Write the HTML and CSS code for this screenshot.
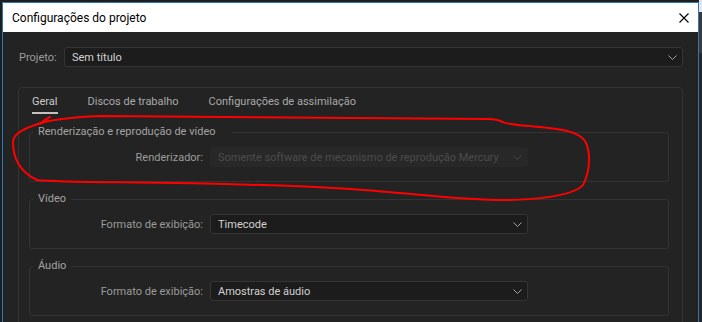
FILE: index.html
```html
<!DOCTYPE html>
<html lang="pt-BR">
<head>
  <meta charset="UTF-8">
  <meta name="viewport" content="width=device-width, initial-scale=1.0">
  <link rel="stylesheet" href="styles.css">
  <title>Configurações do projeto</title>
</head>
<body>
  <div class="screen">
    <div class="dialog">
      <div class="titlebar">
        <span class="title">Configurações do projeto</span>
        <svg class="close" width="10" height="10" viewBox="0 0 10 10">
          <path d="M0.5 0.5 L9.5 9.5 M9.5 0.5 L0.5 9.5" stroke="#000" stroke-width="1.1" fill="none"/>
        </svg>
      </div>

      <div class="dialog-body">
        <div class="project-row">
          <label>Projeto:</label>
          <div class="select">
            <span>Sem título</span>
            <svg class="chevron" width="9" height="5" viewBox="0 0 9 5"><polyline points="0.5,0.5 4.5,4.5 8.5,0.5"/></svg>
          </div>
        </div>

        <div class="tab-panel">
          <div class="tabs">
            <span class="tab active">Geral</span>
            <span class="tab">Discos de trabalho</span>
            <span class="tab">Configurações de assimilação</span>
          </div>

          <!-- Renderização -->
          <fieldset class="group">
            <legend class="wide">Renderização e reprodução de vídeo</legend>
            <div class="field-row">
              <label>Renderizador:</label>
              <div class="select disabled">
                <span>Somente software de mecanismo de reprodução Mercury</span>
                <svg class="chevron" width="9" height="5" viewBox="0 0 9 5"><polyline points="0.5,0.5 4.5,4.5 8.5,0.5"/></svg>
              </div>
            </div>
          </fieldset>

          <fieldset class="group">
            <legend>Vídeo</legend>
            <div class="field-row">
              <label>Formato de exibição:</label>
              <div class="select">
                <span>Timecode</span>
                <svg class="chevron" width="9" height="5" viewBox="0 0 9 5"><polyline points="0.5,0.5 4.5,4.5 8.5,0.5"/></svg>
              </div>
            </div>
          </fieldset>

          <fieldset class="group">
            <legend>Áudio</legend>
            <div class="field-row">
              <label>Formato de exibição:</label>
              <div class="select">
                <span>Amostras de áudio</span>
                <svg class="chevron" width="9" height="5" viewBox="0 0 9 5"><polyline points="0.5,0.5 4.5,4.5 8.5,0.5"/></svg>
              </div>
            </div>
          </fieldset>
        </div>
      </div>
    </div>

    <!-- marcação feita à mão por cima da captura -->
    <svg class="annotation" width="702" height="322" viewBox="0 0 702 322">
      <path d="M100 116 C75 117 50 119 35 125 C20 130 13 135 13 142 C13 158 20 172 37 180
               C70 184 200 180 351 189 C420 194 470 201 510 200 C550 199 580 193 584 183
               C590 170 591 152 585 141 C578 131 560 129 540 127 C520 125 508 125 503 122
               C499 120 495 119 488 119 C400 118 250 117 100 116 Z"/>
      <path d="M50 117 C46 119 42 122 40 124"/>
    </svg>
  </div>
</body>
</html>
```
FILE: styles.css
```css
* {
  box-sizing: border-box;
}
html, body {
  margin: 0;
  background-color: #1e1e1e;
}
body {
  font-family: Roboto, "Noto Sans", sans-serif;
  font-size: 11px;
  overflow: hidden;
}
.screen {
  position: relative;
  width: 702px;
  height: 322px;
  padding-top: 2px;
  overflow: hidden;
  background: linear-gradient(to bottom, #e6e6e6 0 12px, #3a3a3a 12px 53px, #262626 53px) no-repeat right top / 3px 100%;
}
.dialog {
  margin-left: 2px;
  width: 697px;
  height: 320px;
  border: 1px solid #2a77c0;
  border-bottom: none;
  background-color: #232323;
}
.titlebar {
  height: 29px;
  background-color: #fff;
  display: flex;
  align-items: center;
  justify-content: space-between;
  padding: 0 9px;
}
.title {
  font-size: 12px;
  color: #000;
}
.dialog-body {
  padding: 15px 15px 0 15px;
}
.project-row {
  display: flex;
  align-items: center;
}
.project-row label {
  width: 46px;
  padding-left: 1px;
  color: #9b9b9b;
}
.project-row .select {
  flex: 1;
}
.select {
  height: 20px;
  display: flex;
  align-items: center;
  justify-content: space-between;
  padding: 0 5px 0 7px;
  background-color: #1c1c1c;
  border: 1px solid #353535;
  border-radius: 3px;
  color: #d2d2d2;
}
.chevron {
  fill: none;
  stroke: #a0a0a0;
  stroke-width: 1;
}
.select.disabled {
  background-color: #282828;
  border-color: #282828;
  color: #4c4c4c;
}
.select.disabled .chevron {
  stroke: #474747;
}
.tab-panel {
  margin-top: 20px;
  border: 1px solid #333;
  border-radius: 4px;
  padding: 0 13px 30px 10px;
}
.tabs {
  display: flex;
  gap: 30px;
  padding-left: 3px;
}
.tab {
  padding: 7px 0 3px;
  line-height: 14px;
  color: #a9a9a9;
  border-bottom: 2px solid transparent;
}
.tab.active {
  color: #cbcbcb;
  border-bottom-color: #c2c2c2;
}
.group {
  margin: 10px 0 0 0;
  padding: 8px 0 14px 3px;
  border: 1px solid #333;
  border-radius: 3px;
  min-width: 0;
}
.tabs + .group {
  margin-top: 11px;
}
.group legend {
  padding: 0 5px;
  line-height: 14px;
  color: #a3a3a3;
}
.group legend.wide {
  padding-right: 16px;
}
.field-row {
  display: grid;
  grid-template-columns: 170px 318px;
  column-gap: 7px;
  align-items: center;
}
.field-row label {
  text-align: right;
  color: #9b9b9b;
}
.annotation {
  position: absolute;
  top: 0;
  left: 0;
  pointer-events: none;
  fill: none;
  stroke: #f00;
  stroke-width: 2;
  stroke-linecap: round;
}
```
